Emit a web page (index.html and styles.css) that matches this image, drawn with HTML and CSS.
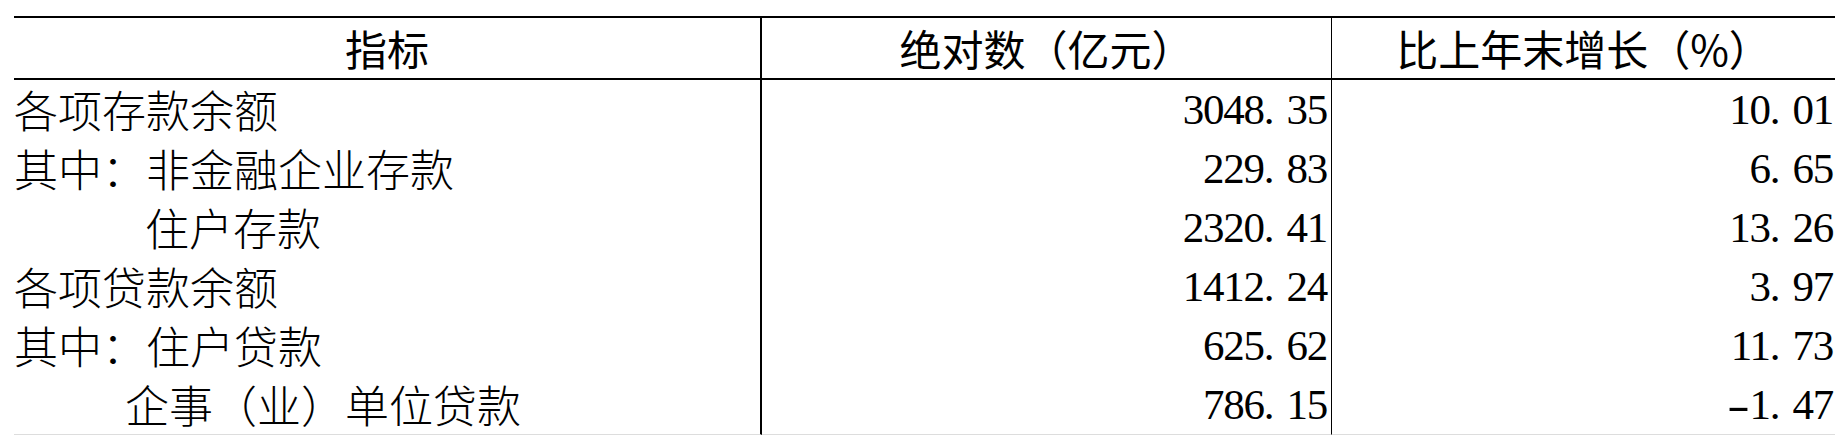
FILE: index.html
```html
<!DOCTYPE html>
<html lang="zh-CN">
<head>
<meta charset="utf-8">
<title>存贷款情况</title>
<link rel="stylesheet" href="styles.css">
</head>
<body>
<table class="stats">
  <thead>
    <tr>
      <th class="c1">指标</th>
      <th class="c2">绝对数（亿元）</th>
      <th class="c3">比上年末增长（%）</th>
    </tr>
  </thead>
  <tbody>
    <tr>
      <td class="name c1">各项存款余额</td>
      <td class="num c2">3048<span class="pt">.</span>35</td>
      <td class="num c3">10<span class="pt">.</span>01</td>
    </tr>
    <tr>
      <td class="name c1">其中：非金融企业存款</td>
      <td class="num c2">229<span class="pt">.</span>83</td>
      <td class="num c3">6<span class="pt">.</span>65</td>
    </tr>
    <tr>
      <td class="name c1 ind1">住户存款</td>
      <td class="num c2">2320<span class="pt">.</span>41</td>
      <td class="num c3">13<span class="pt">.</span>26</td>
    </tr>
    <tr>
      <td class="name c1">各项贷款余额</td>
      <td class="num c2">1412<span class="pt">.</span>24</td>
      <td class="num c3">3<span class="pt">.</span>97</td>
    </tr>
    <tr>
      <td class="name c1">其中：住户贷款</td>
      <td class="num c2">625<span class="pt">.</span>62</td>
      <td class="num c3">11<span class="pt">.</span>73</td>
    </tr>
    <tr class="last">
      <td class="name c1 ind2">企事（业）单位贷款</td>
      <td class="num c2">786<span class="pt">.</span>15</td>
      <td class="num c3"><span class="neg">-</span>1<span class="pt">.</span>47</td>
    </tr>
  </tbody>
</table>
</body>
</html>
```

FILE: styles.css
```css
html, body {
  background: #ffffff;
}

body {
  margin: 16px 0 0 14px;
  color: #000000;
  font-family: "Noto Sans CJK SC", sans-serif;
}

.stats {
  border-collapse: separate;
  border-spacing: 0;
  table-layout: fixed;
  width: 1821px;
}

.stats th,
.stats td {
  box-sizing: border-box;
  padding: 0;
  white-space: nowrap;
}

.stats th {
  height: 64px;
  line-height: 60px;
  border-top: 2px solid #000;
  border-bottom: 2px solid #000;
  font-family: "Noto Sans CJK SC", sans-serif;
  font-weight: 400;
  font-size: 42px;
  text-align: center;
}

.stats th.c1 { width: 748px; }
.stats th.c2 { width: 570px; }
.stats th.c3 { width: 503px; }

.stats .c1 { border-right: 2px solid #000; }
.stats .c2 { border-right: 1px solid #000; }

.stats td {
  height: 59px;
  line-height: 59px;
  vertical-align: middle;
}

.stats tr.last td {
  border-bottom: 1px solid #dddddd;
}

.name {
  padding-left: 1px;
  font-family: "Noto Sans CJK SC", sans-serif;
  font-weight: 300;
  font-size: 44px;
  text-align: left;
}

.name.ind1 { padding-left: 131px; }
.name.ind2 { padding-left: 111px; }

.num {
  font-family: "Liberation Serif", "DejaVu Serif", serif;
  font-size: 43px;
  letter-spacing: -1.2px;
  text-align: right;
}

.num.c2 { padding-right: 4px; }
.num.c3 { padding-right: 2px; }

.pt {
  margin-right: 13px;
}

.neg {
  display: inline-block;
  transform: scaleX(1.6);
  margin-right: 5px;
}
```
